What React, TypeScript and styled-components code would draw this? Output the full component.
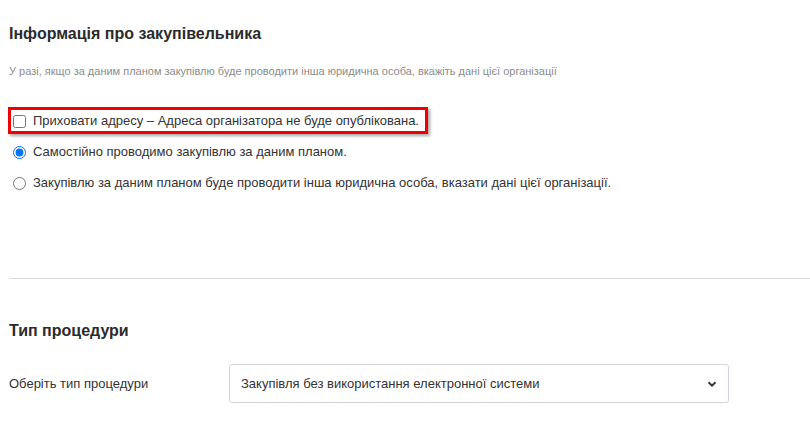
import React, { useState } from "react";
import styled, { createGlobalStyle } from "styled-components";

const GlobalStyle = createGlobalStyle`
    html, body {
        margin: 0;
        padding: 0;
        background: #fff;
    }
    body {
        font-family: "Liberation Sans", Arial, sans-serif;
        font-size: 13px;
        color: #333;
    }
`;

const Page = styled.div`
    width: 810px;
    overflow: hidden;
`;

const Section = styled.section`
    padding: 0 0 0 9px;
`;

const SectionTitle = styled.h2`
    margin: 0;
    font-size: 16px;
    font-weight: bold;
    color: #2b2b2b;
    line-height: 20px;
`;

const Hint = styled.p`
    margin: 0;
    font-size: 11px;
    color: #8c8c8c;
    line-height: 14px;
`;

const OptionList = styled.div`
    display: flex;
    flex-direction: column;
    align-items: flex-start;
`;

const Highlight = styled.div`
    display: inline-flex;
    border: 3px solid #f00000;
    box-shadow: 2px 2px 3px rgba(0, 0, 0, 0.35);
    padding: 2px 6px 1px 2px;
    margin-left: -1px;
`;

const OptionRow = styled.label<{ $indent?: boolean }>`
    display: flex;
    align-items: center;
    gap: 7px;
    line-height: 18px;
    padding-left: ${p => (p.$indent ? "4px" : "0")};
    cursor: pointer;
`;

const Box = styled.input`
    margin: 0;
    width: 13px;
    height: 13px;
`;

const Divider = styled.hr`
    margin: 0;
    border: 0;
    border-top: 1px solid #dcdcdc;
`;

const FieldRow = styled.div`
    display: grid;
    grid-template-columns: 220px 500px;
    align-items: center;
`;

const FieldLabel = styled.span`
    font-size: 13px;
    color: #333;
`;

const SelectWrap = styled.div`
    position: relative;
    height: 39px;
    border: 1px solid #d4d4dc;
    border-radius: 3px;
    box-sizing: border-box;
    display: flex;
    align-items: center;
    padding: 0 11px;
`;

const SelectText = styled.span`
    flex: 1;
    font-size: 13px;
    color: #333;
`;

const Chevron = () => (
    <svg width="10" height="8" viewBox="0 0 10 8">
        <path d="M1.5 2.2 L5 5.6 L8.5 2.2" fill="none" stroke="#333" strokeWidth="2" />
    </svg>
);

export default function App() {
    const [hidden, setHidden] = useState(false);
    const [mode, setMode] = useState("self");

    return (
        <Page>
            <GlobalStyle />
            <Section style={{ paddingTop: 24 }}>
                <SectionTitle>Інформація про закупівельника</SectionTitle>
                <Hint style={{ marginTop: 20 }}>
                    У разі, якщо за даним планом закупівлю буде проводити інша юридична особа, вкажіть дані цієї організації
                </Hint>
                <OptionList style={{ marginTop: 29 }}>
                    <Highlight>
                        <OptionRow>
                            <Box type="checkbox" checked={hidden} onChange={() => setHidden(!hidden)} />
                            Приховати адресу – Адреса організатора не буде опублікована.
                        </OptionRow>
                    </Highlight>
                    <OptionRow $indent style={{ marginTop: 9 }}>
                        <Box type="radio" name="mode" checked={mode === "self"} onChange={() => setMode("self")} />
                        Самостійно проводимо закупівлю за даним планом.
                    </OptionRow>
                    <OptionRow $indent style={{ marginTop: 13 }}>
                        <Box type="radio" name="mode" checked={mode === "other"} onChange={() => setMode("other")} />
                        Закупівлю за даним планом буде проводити інша юридична особа, вказати дані цієї організації.
                    </OptionRow>
                </OptionList>
                <Divider style={{ marginTop: 86 }} />
            </Section>
            <Section style={{ paddingTop: 42 }}>
                <SectionTitle>Тип процедури</SectionTitle>
                <FieldRow style={{ marginTop: 23 }}>
                    <FieldLabel>Оберіть тип процедури</FieldLabel>
                    <SelectWrap>
                        <SelectText>Закупівля без використання електронної системи</SelectText>
                        <Chevron />
                    </SelectWrap>
                </FieldRow>
            </Section>
        </Page>
    );
}
